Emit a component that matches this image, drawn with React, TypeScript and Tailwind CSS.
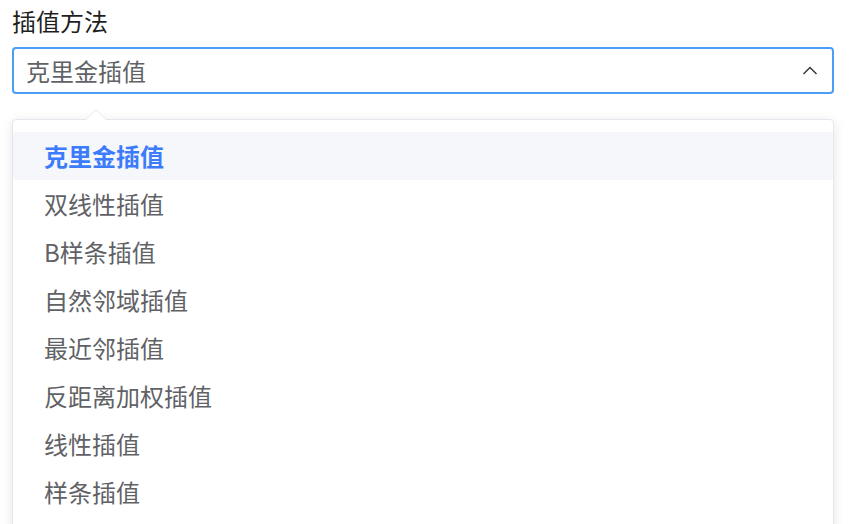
import React from "react";

const items = [
  "克里金插值",
  "双线性插值",
  "B样条插值",
  "自然邻域插值",
  "最近邻插值",
  "反距离加权插值",
  "线性插值",
  "样条插值",
];

export default function App() {
  return (
    <div
      className="w-[852px] h-[524px] overflow-hidden bg-white px-[12px] pt-[4px]"
      style={{ fontFamily: '"Noto Sans CJK SC", "Noto Sans", sans-serif' }}
    >
      <div className="text-[24px] leading-[34px] text-[#1f1f1f]">插值方法</div>
      <div className="mt-[9px] h-[47px] w-[822px] rounded-[4px] border-2 border-[#4a9ff5] flex items-center justify-between pl-[12px] pr-[14px]">
        <span className="text-[24px] text-[#606266]">克里金插值</span>
        <svg width="16" height="10" viewBox="0 0 16 10" fill="none">
          <path d="M1.5 8 L8 1.5 L14.5 8" stroke="#303133" strokeWidth="1.4" />
        </svg>
      </div>
      <div className="relative mt-[25px] w-[822px] rounded-[4px] border border-[#e4e7ed] bg-white shadow-[0_2px_12px_rgba(0,0,0,0.1)] pt-[12px] pb-[40px]">
        <div className="absolute -top-[11px] left-[72px] w-0 h-0 border-x-[11px] border-x-transparent border-b-[11px] border-b-[#e4e7ed]" />
        <div className="absolute -top-[10px] left-[73px] w-0 h-0 border-x-[10px] border-x-transparent border-b-[10px] border-b-white" />
        {items.map((t, i) => (
          <div
            key={t}
            className={
              i === 0
                ? "h-[48px] flex items-center pl-[31px] bg-[#f5f7fa] text-[24px] font-bold text-[#3c7bfb]"
                : "h-[48px] flex items-center pl-[31px] text-[24px] text-[#606266]"
            }
          >
            {t}
          </div>
        ))}
      </div>
    </div>
  );
}
